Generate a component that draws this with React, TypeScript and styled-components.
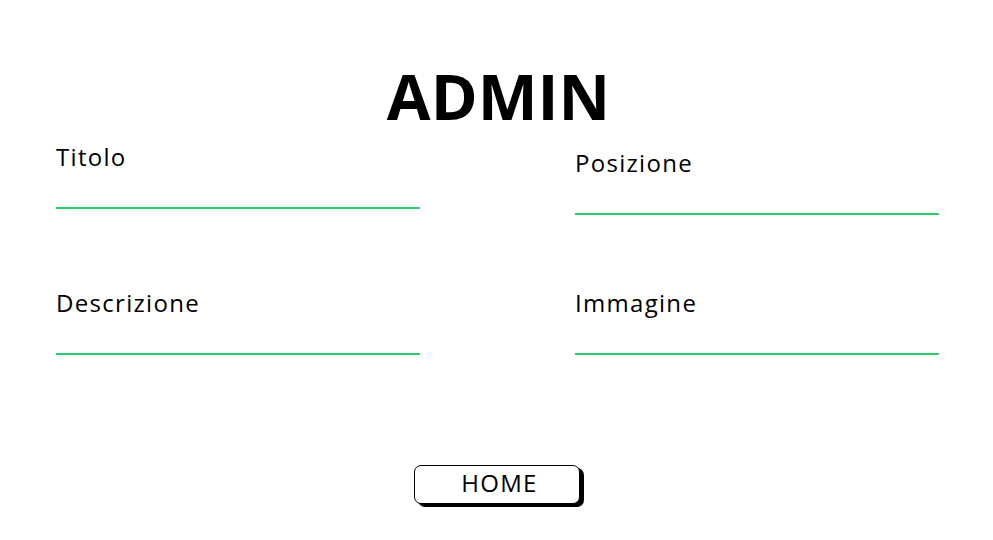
import React from "react";
import styled, { createGlobalStyle } from "styled-components";

const Global = createGlobalStyle`
  html, body { margin: 0; padding: 0; background: #fff; }
  body { font-family: "Open Sans", "Noto Sans", sans-serif; color: #000; }
`;

const Page = styled.div`
  width: 993px;
  height: 540px;
  display: flex;
  flex-direction: column;
  align-items: center;
  box-sizing: border-box;
  padding-top: 56px;
`;

const Title = styled.h1`
  margin: 0 0 0 4px;
  font-family: "Open Sans", sans-serif;
  font-weight: 700;
  font-size: 63.5px;
  line-height: 80px;
`;

const Form = styled.div`
  align-self: stretch;
  margin-top: 5px;
  display: grid;
  grid-template-columns: 364px 364px;
  justify-content: space-between;
  align-items: start;
  padding: 0 54px 0 56px;
  row-gap: 72px;
`;

const Field = styled.label<{ $offset?: number }>`
  display: flex;
  flex-direction: column;
  margin-top: ${(p) => p.$offset ?? 0}px;
`;

const Label = styled.span`
  font-family: "Open Sans", sans-serif;
  font-size: 24px;
  letter-spacing: 1.3px;
  line-height: 32px;
`;

const Input = styled.input`
  margin-top: 6px;
  border: none;
  border-bottom: 2px solid #2ecc71;
  outline: none;
  height: 28px;
  padding: 0;
  background: transparent;
  font-size: 18px;
`;

const Button = styled.button`
  margin-top: 110px;
  width: 166px;
  height: 39px;
  padding: 0 0 3px 6px;
  border: 1px solid #000;
  border-radius: 7px;
  background: #fff;
  box-shadow: 4px 3px 0 #000;
  font-family: "Open Sans", sans-serif;
  font-size: 24px;
  letter-spacing: 1.3px;
  line-height: 1;
  color: #000;
  cursor: pointer;
`;

export default function App() {
  return (
    <>
      <Global />
      <Page>
        <Title>ADMIN</Title>
        <Form>
          <Field>
            <Label>Titolo</Label>
            <Input />
          </Field>
          <Field $offset={6}>
            <Label>Posizione</Label>
            <Input />
          </Field>
          <Field>
            <Label>Descrizione</Label>
            <Input />
          </Field>
          <Field>
            <Label>Immagine</Label>
            <Input />
          </Field>
        </Form>
        <Button>HOME</Button>
      </Page>
    </>
  );
}
